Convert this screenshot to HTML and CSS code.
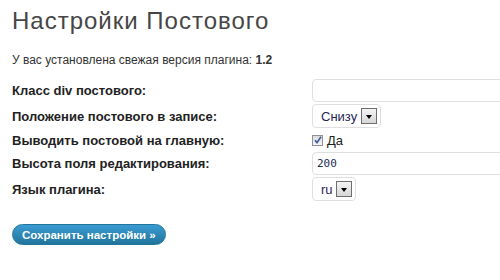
FILE: index.html
```html
<!DOCTYPE html>
<html lang="ru">
<head>
    <meta charset="UTF-8">
    <title>Настройки Постового</title>
    <link rel="stylesheet" href="styles.css">
</head>
<body>

    <div class="wrap">
        <h2>Настройки Постового</h2>

        <p class="version">У вас установлена свежая версия плагина: <b>1.2</b></p>

        <div class="form">
            <div class="row row-text">
                <label>Класс div постового:</label>
                <div class="field"><input type="text" class="text-input" value=""></div>
            </div>

            <div class="row row-select">
                <label>Положение постового в записе:</label>
                <div class="field">
                    <div class="select select-pos">
                        <span class="select-value">Снизу</span>
                        <span class="select-arrow"></span>
                    </div>
                </div>
            </div>

            <div class="row row-check">
                <label>Выводить постовой на главную:</label>
                <div class="field">
                    <span class="checkbox">
                        <svg width="8" height="8" viewBox="0 0 8 8"><path d="M1 4.2 L3 6.6 L7 0.8" fill="none" stroke="#3b5c9c" stroke-width="1.6"/></svg>
                    </span>
                    <span class="check-label">Да</span>
                </div>
            </div>

            <div class="row row-text">
                <label>Высота поля редактирования:</label>
                <div class="field"><input type="text" class="text-input mono" value="200"></div>
            </div>

            <div class="row row-select">
                <label>Язык плагина:</label>
                <div class="field">
                    <div class="select select-lang">
                        <span class="select-value">ru</span>
                        <span class="select-arrow"></span>
                    </div>
                </div>
            </div>
        </div>

        <button class="button-primary">Сохранить настройки »</button>
    </div>

</body>
</html>
```

FILE: styles.css
```css
body {
    margin: 0;
    padding: 0;
    background-color: #ffffff;
    color: #333333;
    font-family: "Liberation Sans", Arial, sans-serif;
    overflow: hidden;
}

.wrap {
    padding: 7px 0 0 12px;
}

h2 {
    margin: 0;
    font-size: 24px;
    font-weight: normal;
    letter-spacing: 1px;
    color: #464646;
    line-height: 28px;
}

.version {
    margin: 18px 0 0 0;
    font-size: 12px;
    line-height: 14px;
    color: #333333;
}

.form {
    margin-top: 12px;
    display: flex;
    flex-direction: column;
    gap: 2px;
}

.row {
    display: flex;
    align-items: center;
}

.row-text {
    height: 23px;
}

.row-select {
    height: 24px;
}

.row-check {
    height: 20px;
}

.row label {
    flex-shrink: 0;
    width: 300px;
    font-size: 13px;
    font-weight: bold;
    color: #222222;
}

.field {
    flex: 1;
    min-width: 0;
    display: flex;
    align-items: center;
    overflow: hidden;
}

.text-input {
    box-sizing: border-box;
    flex-shrink: 0;
    width: 230px;
    height: 23px;
    margin: 0;
    padding: 2px 4px;
    border: 1px solid #dfdfdf;
    border-radius: 4px;
    background-color: #ffffff;
    font-family: "Liberation Sans", Arial, sans-serif;
    font-size: 12px;
    color: #333333;
}

.text-input.mono {
    font-family: "DejaVu Sans Mono", "Liberation Mono", monospace;
    font-size: 11px;
    color: #1d2b55;
}

.select {
    box-sizing: border-box;
    height: 24px;
    display: flex;
    align-items: center;
    justify-content: space-between;
    padding: 0 3px 0 8px;
    border: 1px solid #dfdfdf;
    border-radius: 4px;
    background-color: #ffffff;
    font-size: 13px;
    color: #2a1f55;
}

.select-pos {
    width: 69px;
}

.select-lang {
    width: 44px;
}

.select-arrow {
    box-sizing: border-box;
    width: 16px;
    height: 16px;
    border: 1px solid #6e6e6e;
    background: linear-gradient(#f4f4f4, #d6d6d6);
    display: flex;
    align-items: center;
    justify-content: center;
}

.select-arrow::after {
    content: "";
    border-left: 3.5px solid transparent;
    border-right: 3.5px solid transparent;
    border-top: 4px solid #000000;
    margin-top: 1px;
}

.checkbox {
    box-sizing: border-box;
    width: 11px;
    height: 11px;
    border: 1px solid #8f8f9d;
    background: linear-gradient(#dcdcdc, #f6f6f6);
    display: flex;
    align-items: center;
    justify-content: center;
}

.check-label {
    margin-left: 4px;
    font-size: 13px;
    color: #222222;
}

.button-primary {
    margin-top: 23px;
    padding: 0 9px;
    height: 21px;
    border: 1px solid #21759b;
    border-radius: 11px;
    background: linear-gradient(#3a9bd2, #21759b);
    color: #ffffff;
    font-family: "Liberation Sans", Arial, sans-serif;
    font-size: 11.5px;
    font-weight: bold;
    cursor: pointer;
}
```
